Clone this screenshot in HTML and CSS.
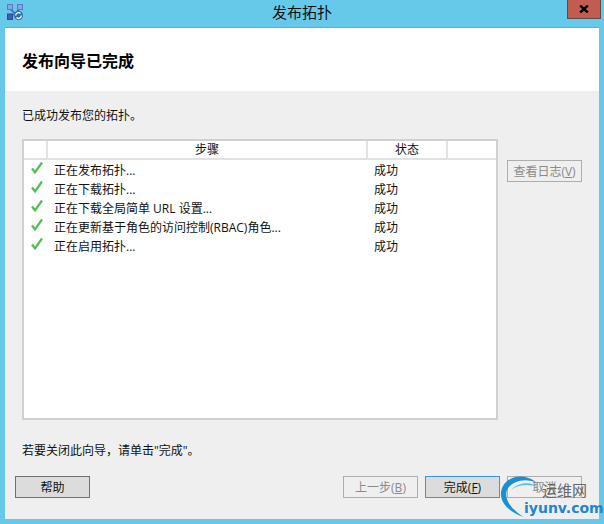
FILE: index.html
```html
<!DOCTYPE html>
<html lang="zh">
<head>
<meta charset="utf-8">
<title>发布拓扑</title>
<link rel="stylesheet" href="styles.css">
</head>
<body>
<div class="window">
  <div class="titlebar">
    <svg class="app-icon" width="16" height="16" viewBox="0 0 16 16">
      <path d="M3 5l7 6M13 5l-7 6" stroke="#3f5fb0" stroke-width="1.5" fill="none"/>
      <rect x="0.5" y="0.5" width="5" height="5" fill="#86a6ea" stroke="#5a78c8"/>
      <rect x="10.5" y="0.5" width="5" height="5" fill="#86a6ea" stroke="#5a78c8"/>
      <rect x="0.5" y="10" width="5" height="5.5" fill="#3f5fb0" stroke="#2f4a94"/>
      <circle cx="11.5" cy="11.5" r="4.5" fill="#2b6ea8"/>
      <path d="M8.7 11.5a2.8 2.8 0 0 1 4.8-2M14.3 11.5a2.8 2.8 0 0 1-4.8 2" stroke="#fff" stroke-width="1.3" fill="none"/>
    </svg>
    <div class="title">发布拓扑</div>
    <div class="close"><svg width="10" height="8" viewBox="0 0 10 8"><path d="M1.2 0.5L8.8 7.5M8.8 0.5L1.2 7.5" stroke="#000" stroke-width="2.4"/></svg></div>
  </div>
  <div class="client">
    <header class="heading"><h1>发布向导已完成</h1></header>
    <main class="body">
      <p class="intro">已成功发布您的拓扑。</p>
      <div class="table-row">
        <div class="table">
          <div class="thead">
            <div class="th c1"></div>
            <div class="th c2">步骤</div>
            <div class="th c3">状态</div>
            <div class="th c4"></div>
          </div>
          <div class="row"><svg class="check" viewBox="0 0 12 12"><path d="M1 6.5L4 10.5L11 0.5"/></svg><span class="step">正在发布拓扑...</span><span class="status">成功</span></div>
          <div class="row"><svg class="check" viewBox="0 0 12 12"><path d="M1 6.5L4 10.5L11 0.5"/></svg><span class="step">正在下载拓扑...</span><span class="status">成功</span></div>
          <div class="row"><svg class="check" viewBox="0 0 12 12"><path d="M1 6.5L4 10.5L11 0.5"/></svg><span class="step">正在下载全局简单 URL 设置...</span><span class="status">成功</span></div>
          <div class="row"><svg class="check" viewBox="0 0 12 12"><path d="M1 6.5L4 10.5L11 0.5"/></svg><span class="step">正在更新基于角色的访问控制(RBAC)角色...</span><span class="status">成功</span></div>
          <div class="row"><svg class="check" viewBox="0 0 12 12"><path d="M1 6.5L4 10.5L11 0.5"/></svg><span class="step">正在启用拓扑...</span><span class="status">成功</span></div>
        </div>
        <button class="btn disabled log">查看日志(<u>V</u>)</button>
      </div>
      <p class="outro">若要关闭此向导，请单击"完成"。</p>
      <div class="buttons">
        <button class="btn">帮助</button>
        <div class="spacer"></div>
        <button class="btn disabled">上一步(<u>B</u>)</button>
        <button class="btn primary">完成(<u>F</u>)</button>
        <button class="btn disabled cancel">取消</button>
      </div>
    </main>
  </div>
  <div class="watermark">
    <svg width="64" height="50" viewBox="0 0 64 50">
      <path d="M40 9C30 0 13 0 6 12C1 21 4 35 27 43C13 35 7 24 10 16C14 7 29 3 40 9Z" fill="#1b8fd6"/>
      <path d="M42 13C33 7 21 8 14 16C21 10 32 10 42 13Z" fill="#55bdf0"/>
    </svg>
    <span class="wm-cn">运维网</span>
    <span class="wm-en">iyunv.com</span>
  </div>
</div>
</body>
</html>
```
FILE: styles.css
```css
* { box-sizing: border-box; }
html, body { margin: 0; height: 100%; }
body { font-family: "Open Sans", "Noto Sans CJK SC", sans-serif; font-size: 12px; color: #111; overflow: hidden; }
.window { position: relative; width: 604px; height: 524px; background: #66c9ea; padding: 0 5px 5px; display: flex; flex-direction: column; }
.titlebar { height: 28px; flex: none; display: grid; grid-template-columns: 1fr auto 1fr; align-items: start; border-bottom: 1px solid #5fb0d0; }
.app-icon { margin: 4px 0 0 2px; }
.title { font-size: 15px; line-height: 24px; color: #111; }
.close { justify-self: end; margin-right: -2px; width: 34px; height: 19px; background: #c25b50; border: 1px solid #5a4a48; border-top: 0; display: flex; align-items: center; justify-content: center; }
.client { flex: 1; display: flex; flex-direction: column; background: #efefef; }
.heading { height: 63px; flex: none; background: #fff; display: flex; align-items: center; padding-left: 17px; }
.heading h1 { margin: 0; font-size: 16px; font-weight: 700; color: #000; }
.body { flex: 1; display: flex; flex-direction: column; padding: 16px 17px 0; }
.intro { margin: 0; line-height: 18px; height: 32px; }
.table-row { display: flex; align-items: flex-start; gap: 9px; }
.table { flex: none; width: 476px; height: 281px; background: #fff; border: 2px solid #d0d0d0; }
.thead { display: flex; height: 19px; border-bottom: 2px solid #e2e2e2; }
.th { text-align: center; line-height: 17px; border-right: 2px solid #e2e2e2; height: 17px; }
.c1 { width: 24px; }
.c2 { width: 320px; }
.c3 { width: 80px; }
.c4 { flex: 1; border-right: 0; }
.row { display: flex; align-items: center; height: 19px; }
.check { width: 12px; height: 12px; margin: -4px 11px 0 7px; flex: none; overflow: visible; }
.check path { fill: none; stroke: #4fc04f; stroke-width: 2.2; }
.step { width: 320px; white-space: nowrap; }
.status { white-space: nowrap; }
.log { margin-top: 21px; width: 75px; height: 22px; }
.outro { margin: 22px 0 0; line-height: 18px; }
.buttons { display: flex; margin: 16px 0 0 -7px; gap: 7px; }
.spacer { flex: 1; }
.btn { flex: none; width: 75px; height: 22px; padding: 0; font: inherit; color: #111; background: #dcdcdc; border: 1px solid #707070; white-space: nowrap; }
.btn.disabled { background: #efefef; border-color: #adadad; color: #8a8a8a; }
.btn.primary { border-color: #3c94e8; }
.watermark { position: absolute; left: 497px; top: 474px; width: 107px; height: 50px; }
.watermark svg { position: absolute; left: 0; top: 0; }
.wm-cn { position: absolute; left: 45px; top: 7px; font-size: 15px; line-height: 18px; color: #666; white-space: nowrap; }
.wm-en { position: absolute; left: 27px; top: 25px; font-family: "DejaVu Sans", sans-serif; font-weight: 700; font-size: 14px; line-height: 18px; color: #1f86d0; white-space: nowrap; }
```
